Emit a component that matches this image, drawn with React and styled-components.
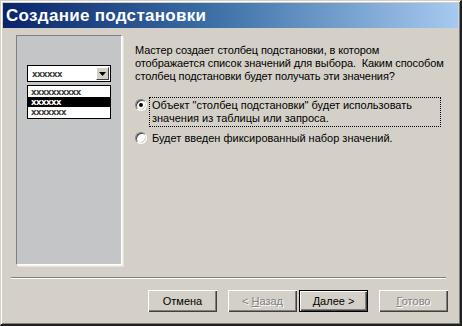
import React from "react";
import styled, { createGlobalStyle } from "styled-components";

const GlobalStyle = createGlobalStyle`
    html, body {
        margin: 0;
        padding: 0;
        background: #d4d0c8;
    }
    * {
        box-sizing: border-box;
    }
`

const Window = styled.div`
    width: 462px;
    height: 326px;
    display: flex;
    flex-direction: column;
    background: #d4d0c8;
    border-top: 1px solid #d4d0c8;
    border-left: 1px solid #d4d0c8;
    border-right: 2px solid #202020;
    border-bottom: 2px solid #202020;
    box-shadow: inset 1px 1px 0 #ffffff, inset -1px -1px 0 #808080;
    padding: 2px;
    font-family: "Liberation Sans", Arial, sans-serif;
    font-size: 11px;
    color: #000;
    overflow: hidden;
`

const TitleBar = styled.div`
    height: 25px;
    display: flex;
    align-items: center;
    padding-left: 3px;
    background: linear-gradient(to right, #0a246a 0%, #3a6ea5 45%, #a6caf0 100%);
    color: #fff;
    font-family: "Liberation Sans", Arial, sans-serif;
    font-weight: bold;
    font-size: 17px;
    letter-spacing: 0.3px;
    flex-shrink: 0;
`

const Body = styled.div`
    height: 249px;
    display: flex;
    gap: 13px;
    padding: 7px 10px 0 13px;
    flex-shrink: 0;
`

const PicturePanel = styled.div`
    width: 106px;
    height: 230px;
    background: #c3c5c6;
    border-top: 1px solid #808080;
    border-left: 1px solid #808080;
    border-right: 1px solid #ffffff;
    border-bottom: 1px solid #ffffff;
    box-shadow: 1px 1px 0 #f4f2ee, 2px 2px 0 #e6e3dc;
    display: flex;
    flex-direction: column;
    padding: 29px 0 0 10px;
`

const Combo = styled.div`
    width: 84px;
    height: 17px;
    background: #fff;
    border: 1px solid #000;
    display: flex;
    align-items: center;
    justify-content: space-between;
    padding-left: 4px;
    color: #404040;
`

const ComboArrow = styled.div`
    width: 13px;
    height: 13px;
    margin-right: 1px;
    background: #d4d0c8;
    border-top: 1px solid #fff;
    border-left: 1px solid #fff;
    border-right: 1px solid #404040;
    border-bottom: 1px solid #404040;
    display: flex;
    align-items: center;
    justify-content: center;
`

const ListBox = styled.div`
    width: 84px;
    margin-top: 3px;
    background: #fff;
    border: 1px solid #000;
    padding: 1px 0;
    display: flex;
    flex-direction: column;
`

const ListItem = styled.div`
    height: 10px;
    display: flex;
    align-items: center;
    padding-left: 3px;
    background: ${props => props.selected ? "#000" : "#fff"};
    color: ${props => props.selected ? "#fff" : "#404040"};
`

const Placeholder = styled.span`
    font-family: "DejaVu Sans", sans-serif;
    font-size: 8.5px;
    font-weight: bold;
    letter-spacing: -0.5px;
    color: inherit;
`

const Content = styled.div`
    flex: 1;
    display: flex;
    flex-direction: column;
    padding-top: 9px;
`

const Intro = styled.p`
    margin: 0;
    line-height: 13px;
    white-space: nowrap;
    letter-spacing: -0.1px;
`

const Options = styled.div`
    display: flex;
    flex-direction: column;
    gap: 5px;
    margin-top: 15px;
`

const Option = styled.label`
    display: flex;
    align-items: flex-start;
    gap: 3px;
`

const Radio = styled.span`
    width: 12px;
    height: 12px;
    margin-top: 1px;
    flex-shrink: 0;
    border-radius: 50%;
    background: #fff;
    border: 1px solid;
    border-color: #808080 #ffffff #ffffff #808080;
    box-shadow: inset 1px 1px 0 #404040, inset -1px -1px 0 #d4d0c8;
    display: flex;
    align-items: center;
    justify-content: center;
    &::after {
        content: "";
        width: 4px;
        height: 4px;
        border-radius: 50%;
        background: ${props => props.checked ? "#000" : "transparent"};
    }
`

const OptionText = styled.span`
    line-height: 13px;
    padding: 1px 2px;
    white-space: nowrap;
    width: ${props => props.focused ? "290px" : "auto"};
    outline: ${props => props.focused ? "1px dotted #000" : "none"};
    outline-offset: 0;
`

const Separator = styled.div`
    margin: 0 12px 0 8px;
    height: 2px;
    border-top: 1px solid #808080;
    border-bottom: 1px solid #ffffff;
    flex-shrink: 0;
`

const ButtonRow = styled.div`
    display: flex;
    justify-content: flex-end;
    gap: 2px;
    padding: 11px 10px 0 0;
    flex-shrink: 0;
`

const Button = styled.button`
    width: 69px;
    height: 22px;
    margin-left: ${props => props.spaced ? "9px" : "0"};
    background: #d4d0c8;
    font-family: "Liberation Sans", Arial, sans-serif;
    font-size: 11px;
    color: ${props => props.disabled ? "#808080" : "#000"};
    text-shadow: ${props => props.disabled ? "1px 1px 0 #fff" : "none"};
    border: ${props => props.isDefault ? "1px solid #000" : "none"};
    box-shadow: inset 1px 1px 0 #ffffff, inset -1px -1px 0 #404040, inset -2px -2px 0 #808080;
    padding: 0;
    u {
        text-decoration: underline;
    }
`

const DropArrow = () => (
    <svg width="7" height="4" viewBox="0 0 7 4">
        <path d="M0 0h7L3.5 4z" fill="#000" />
    </svg>
)

export default function App() {
    return (
        <>
            <GlobalStyle />
            <Window>
                <TitleBar>Создание подстановки</TitleBar>
                <Body>
                    <PicturePanel>
                        <Combo>
                            <Placeholder>xxxxxx</Placeholder>
                            <ComboArrow><DropArrow /></ComboArrow>
                        </Combo>
                        <ListBox>
                            <ListItem><Placeholder>xxxxxxxxxx</Placeholder></ListItem>
                            <ListItem selected><Placeholder>xxxxxx</Placeholder></ListItem>
                            <ListItem><Placeholder>xxxxxxx</Placeholder></ListItem>
                        </ListBox>
                    </PicturePanel>
                    <Content>
                        <Intro>
                            Мастер создает столбец подстановки, в котором<br />
                            отображается список значений для выбора.&nbsp; Каким способом<br />
                            столбец подстановки будет получать эти значения?
                        </Intro>
                        <Options>
                            <Option>
                                <Radio checked />
                                <OptionText focused>
                                    Объект "столбец подстановки" будет использовать<br />
                                    значения из таблицы или запроса.
                                </OptionText>
                            </Option>
                            <Option>
                                <Radio />
                                <OptionText>Будет введен фиксированный набор значений.</OptionText>
                            </Option>
                        </Options>
                    </Content>
                </Body>
                <Separator />
                <ButtonRow>
                    <Button>Отмена</Button>
                    <Button spaced disabled>&lt; <u>Н</u>азад</Button>
                    <Button isDefault><u>Д</u>алее &gt;</Button>
                    <Button spaced disabled><u>Г</u>отово</Button>
                </ButtonRow>
            </Window>
        </>
    )
}
